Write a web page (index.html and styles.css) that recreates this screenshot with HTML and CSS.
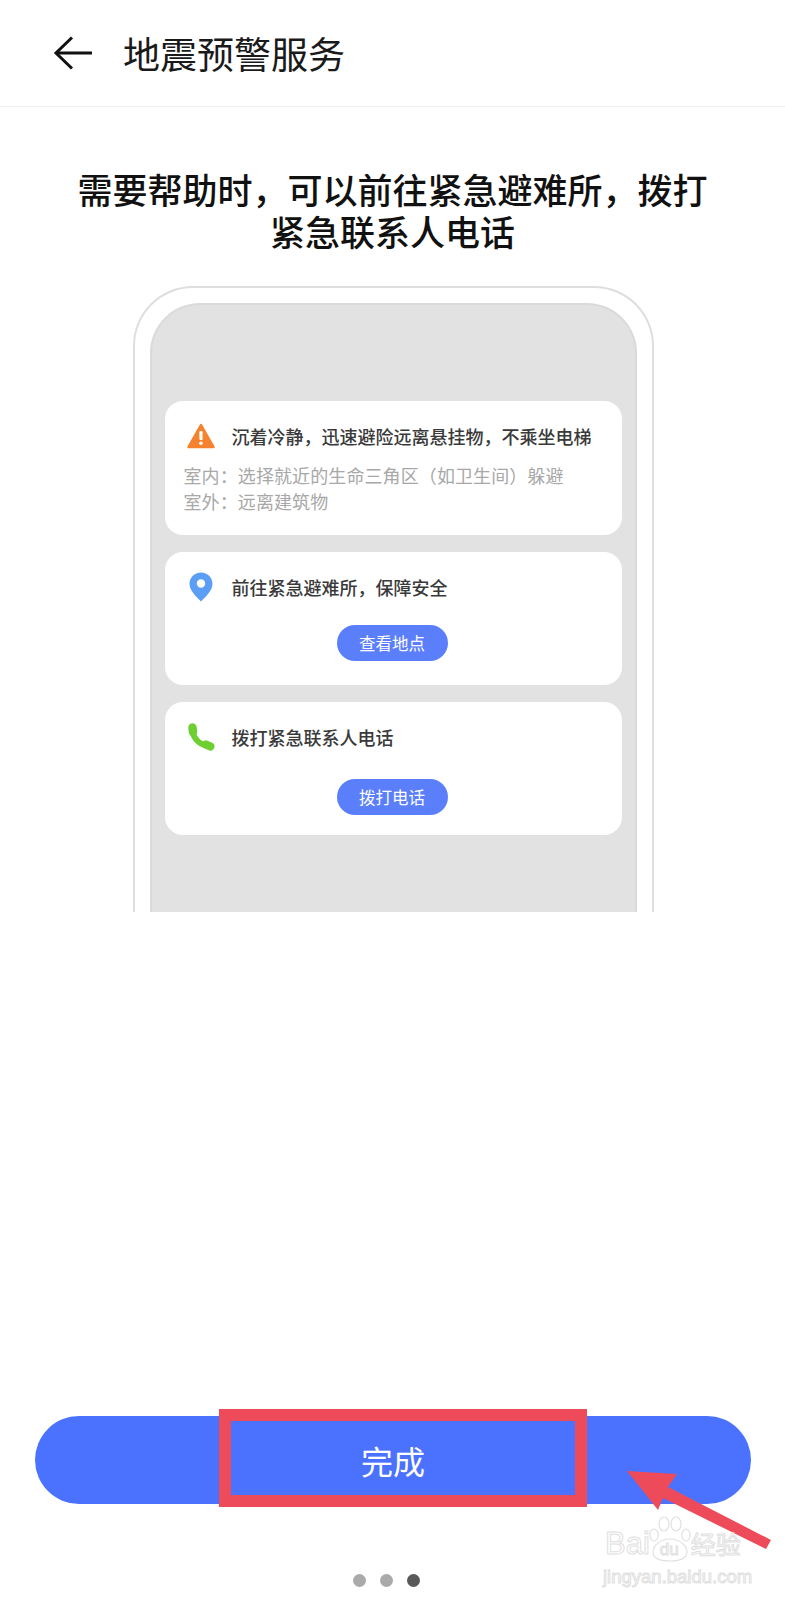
FILE: index.html
```html
<!DOCTYPE html>
<html lang="zh-CN">
<head>
    <meta charset="UTF-8">
    <meta name="viewport" content="width=device-width, initial-scale=1.0">
    <title>地震预警服务</title>
    <link rel="stylesheet" href="styles.css">
</head>
<body>
    <div class="page">
        <header class="app-bar">
            <svg class="back-icon" width="40" height="34" viewBox="0 0 40 34" fill="none" stroke="#111" stroke-width="3">
                <path d="M19 1.5 L3 17 L19 32.5"/>
                <path d="M3 17 H39"/>
            </svg>
            <h1 class="app-title">地震预警服务</h1>
        </header>

        <h2 class="headline">需要帮助时，可以前往紧急避难所，拨打<br>紧急联系人电话</h2>

        <!-- Phone preview, cut off at the bottom -->
        <div class="phone">
            <div class="panel">
                <div class="card card-alert">
                    <div class="card-row">
                        <svg class="card-icon" width="28" height="26" viewBox="0 0 28 26">
                            <path d="M14 2 L26.5 24 H1.5 Z" fill="#f5822e" stroke="#f5822e" stroke-width="2.5" stroke-linejoin="round"/>
                            <rect x="12.4" y="8" width="3.2" height="9" rx="1.2" fill="#fff"/>
                            <circle cx="14" cy="20.3" r="1.8" fill="#fff"/>
                        </svg>
                        <p class="card-title">沉着冷静，迅速避险远离悬挂物，不乘坐电梯</p>
                    </div>
                    <p class="card-note">室内：选择就近的生命三角区（如卫生间）躲避<br>室外：远离建筑物</p>
                </div>

                <div class="card">
                    <div class="card-row">
                        <svg class="card-icon" width="28" height="30" viewBox="0 0 28 30">
                            <path d="M14 0.5 C7.5 0.5 2.5 5.5 2.5 11.8 C2.5 18.5 9 24.5 14 29.5 C19 24.5 25.5 18.5 25.5 11.8 C25.5 5.5 20.5 0.5 14 0.5 Z" fill="#5a9ef5"/>
                            <circle cx="14" cy="11.5" r="4.2" fill="#fff"/>
                        </svg>
                        <p class="card-title">前往紧急避难所，保障安全</p>
                    </div>
                    <button class="pill-btn">查看地点</button>
                </div>

                <div class="card card-call">
                    <div class="card-row">
                        <svg class="card-icon" width="28" height="28" viewBox="0 0 28 28" fill="none" stroke="#6fcf32" stroke-linecap="round">
                            <path d="M5.5 6 C5 13 11 21.5 21 23" stroke-width="6"/>
                            <path d="M5.5 4.5 L6 9" stroke-width="8.5"/>
                            <path d="M19 21.5 L23.5 23.5" stroke-width="8"/>
                        </svg>
                        <p class="card-title">拨打紧急联系人电话</p>
                    </div>
                    <button class="pill-btn">拨打电话</button>
                </div>
            </div>
        </div>

        <footer class="footer">
            <div class="done-wrap">
                <button class="done-btn">完成</button>
                <div class="mark-box"></div>
                <svg class="mark-arrow" width="150" height="85" viewBox="0 0 150 85">
                    <path d="M1 1 L51 4 L42 17 L145 70 L140 79 L37 28 L32 40 Z" fill="#ee4b5a"/>
                </svg>
            </div>
            <div class="dots">
                <span class="dot"></span>
                <span class="dot"></span>
                <span class="dot dot-active"></span>
            </div>

            <!-- Watermark -->
            <div class="watermark">
                <div class="wm-logo">
                    <span class="wm-bai">Bai</span>
                    <svg class="wm-paw" width="42" height="46" viewBox="0 0 42 46" fill="#fff" stroke="#e0e0e0" stroke-width="1.2">
                        <ellipse cx="5" cy="19" rx="4.2" ry="6"/>
                        <ellipse cx="15" cy="8" rx="5" ry="7"/>
                        <ellipse cx="27" cy="8" rx="5" ry="7"/>
                        <ellipse cx="37" cy="19" rx="4.2" ry="6"/>
                        <path d="M21 23 C12 23 4 29 4 36 C4 42 11 45 21 45 C31 45 38 42 38 36 C38 29 30 23 21 23 Z"/>
                    </svg>
                    <span class="wm-du">du</span>
                    <span class="wm-jy">经验</span>
                </div>
                <div class="wm-url">jingyan.baidu.com</div>
            </div>
        </footer>
    </div>
</body>
</html>
```

FILE: styles.css
```css
/* General Styling */
body {
    font-family: 'Noto Sans CJK SC', 'Liberation Sans', sans-serif;
    background-color: #fff;
    color: #111;
    margin: 0;
    padding: 0;
}

.page {
    width: 785px;
    height: 1600px;
    display: flex;
    flex-direction: column;
    overflow: hidden;
}

/* Header */
.app-bar {
    height: 106px;
    display: flex;
    align-items: center;
    padding-left: 53px;
    border-bottom: 1px solid #f0f0f0;
    flex-shrink: 0;
}

.back-icon {
    margin-right: 30px;
}

.app-title {
    margin: 0;
    font-size: 37px;
    font-weight: 400;
    line-height: 50px;
    color: #1a1a1a;
}

.headline {
    margin: 61px 0 34px;
    font-size: 35px;
    font-weight: 500;
    line-height: 42px;
    text-align: center;
    color: #111;
}

/* Phone preview */
.phone {
    box-sizing: border-box;
    width: 521px;
    height: 626px;
    margin: 0 0 0 132.5px;
    padding: 15px 15px 0;
    display: flex;
    border: 2px solid #dedede;
    border-bottom: none;
    border-radius: 60px 60px 0 0;
    flex-shrink: 0;
}

.panel {
    flex: 1;
    box-sizing: border-box;
    padding: 96px 13px 0;
    display: flex;
    flex-direction: column;
    gap: 17px;
    background-color: #e2e2e2;
    border: 2px solid #dadada;
    border-bottom: none;
    border-radius: 50px 50px 0 0;
}

.card {
    height: 133px;
    box-sizing: border-box;
    padding: 21px 0 0 22px;
    display: flex;
    flex-direction: column;
    align-items: flex-start;
    background-color: #fff;
    border-radius: 18px;
}

.card-alert {
    height: 134px;
}

.card-row {
    height: 28px;
    display: flex;
    align-items: center;
}

.card-icon {
    width: 28px;
    margin-right: 17px;
    flex-shrink: 0;
}

.card-title {
    margin: 0;
    font-size: 18px;
    font-weight: 500;
    line-height: 28px;
    color: #3a3a3a;
    white-space: nowrap;
}

.card-note {
    margin: 12px 0 0 -3px;
    font-size: 18px;
    line-height: 26px;
    letter-spacing: 0.1px;
    color: #a8a8a8;
    white-space: nowrap;
}

.pill-btn {
    width: 111px;
    height: 36px;
    margin: 24px 0 0 150px;
    padding: 0;
    border: none;
    border-radius: 18px;
    background-color: #5b7ffb;
    color: #fff;
    font-family: inherit;
    font-size: 16.5px;
    line-height: 36px;
}

.card-call .pill-btn {
    margin-top: 28px;
}

/* Footer */
.footer {
    position: relative;
    flex: 1;
    padding-top: 504px;
}

.done-wrap {
    position: relative;
    margin: 0 34px 0 35px;
}

.done-btn {
    display: block;
    width: 100%;
    height: 88px;
    padding: 0;
    border: none;
    border-radius: 44px;
    background-color: #4a72ff;
    color: #fff;
    font-family: inherit;
    font-size: 32px;
    line-height: 88px;
}

/* Red annotation over the button */
.mark-box {
    position: absolute;
    left: 184px;
    top: -7px;
    width: 368px;
    height: 98px;
    box-sizing: border-box;
    border: 12.5px solid #ee4b5a;
}

.mark-arrow {
    position: absolute;
    left: 591px;
    top: 54px;
}

.dots {
    margin: 70px 0 0;
    padding-right: 13px;
    display: flex;
    justify-content: center;
    gap: 14px;
}

.dot {
    width: 13px;
    height: 13px;
    border-radius: 50%;
    background-color: #aaa;
}

.dot-active {
    background-color: #595959;
}

/* Watermark */
.watermark {
    position: absolute;
    left: 603px;
    top: 604px;
    width: 142px;
    color: transparent;
    font-family: 'Liberation Sans', 'Noto Sans CJK SC', sans-serif;
    -webkit-text-stroke: 1px #e0e0e0;
}

.wm-logo {
    height: 46px;
    display: flex;
    align-items: flex-end;
    white-space: nowrap;
}

.wm-bai {
    margin-left: 2px;
    font-size: 31px;
    line-height: 36px;
}

.wm-paw {
    margin-left: -1px;
    flex-shrink: 0;
}

.wm-du {
    width: 0;
    margin-left: -31px;
    margin-right: 31px;
    font-size: 17px;
    line-height: 24px;
}

.wm-jy {
    font-size: 25px;
    line-height: 34px;
}

.wm-url {
    margin-top: 4px;
    font-size: 18.5px;
    line-height: 22px;
    white-space: nowrap;
}
```
